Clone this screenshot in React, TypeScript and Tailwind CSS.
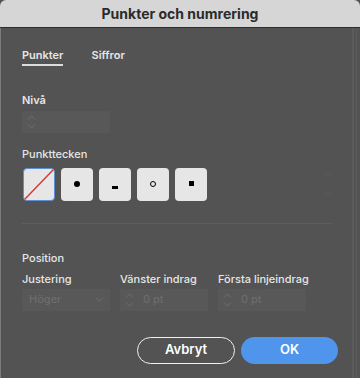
import React from "react";

function Chev({ dir }: { dir: "up" | "down" }) {
  return (
    <svg width="9" height="5" viewBox="0 0 9 5" fill="none">
      {dir === "up" ? (
        <path d="M1 4.5 L4.5 1 L8 4.5" stroke="#6f6f6f" strokeWidth="1" />
      ) : (
        <path d="M1 0.5 L4.5 4 L8 0.5" stroke="#6f6f6f" strokeWidth="1" />
      )}
    </svg>
  );
}

function Spinner({ value }: { value?: string }) {
  return (
    <div className="flex h-[22px] w-[88px] items-center bg-[#585858]">
      <div className="flex w-[18px] flex-col items-center gap-[4px] pl-[1px]">
        <Chev dir="up" />
        <Chev dir="down" />
      </div>
      <span className="pl-[5px] text-[11px] text-[#6c6c6c]">{value}</span>
    </div>
  );
}

function Box({ children, selected }: { children?: React.ReactNode; selected?: boolean }) {
  return (
    <div
      className={
        "relative flex h-[33px] w-[32px] items-center justify-center overflow-hidden rounded-[4px] bg-[#e6e6e6] " +
        (selected ? "border-[1.5px] border-[#5c8fd6]" : "")
      }
    >
      {children}
    </div>
  );
}

export default function App() {
  return (
    <div
      className="relative flex h-[378px] w-[360px] flex-col overflow-hidden bg-[#535353]"
      style={{ fontFamily: "Inter, 'Liberation Sans', sans-serif" }}
    >
      <div className="flex h-[28px] shrink-0 items-center justify-center rounded-t-[6px] border-b border-[#2e2e2e] bg-[#d6d6d6]">
        <span className="text-[14px] font-bold text-[#2b2b2b]">Punkter och numrering</span>
      </div>
      <div className="flex flex-1 border-l border-[#7c7c7c]">
        <div className="flex flex-1 flex-col pl-[21px] pr-[14px] text-[#e6e6e6]">
          <div className="mt-[19px] flex gap-[28px] text-[11px] font-semibold">
            <div className="flex flex-col">
              <span>Punkter</span>
              <div className="h-[2px] bg-[#dcdcdc]" />
            </div>
            <span>Siffror</span>
          </div>

          <span className="mt-[26px] text-[11px] font-semibold">Nivå</span>
          <div className="mt-[3px]">
            <Spinner />
          </div>

          <span className="mt-[13px] text-[11px] font-medium">Punkttecken</span>
          <div className="mt-[5px] flex items-center">
            <div className="flex gap-[6px] pl-[1px]">
              <Box selected>
                <svg className="absolute inset-0" width="100%" height="100%" viewBox="0 0 30 30" preserveAspectRatio="none">
                  <line x1="0" y1="30" x2="30" y2="0" stroke="#d33a35" strokeWidth="1.5" />
                </svg>
              </Box>
              <Box>
                <div className="h-[6px] w-[6px] rounded-full bg-black" />
              </Box>
              <Box>
                <div className="mt-[6px] h-[3px] w-[6px] bg-black" />
              </Box>
              <Box>
                <div className="h-[6px] w-[6px] rounded-full border-[1.5px] border-black" />
              </Box>
              <Box>
                <div className="mb-[1px] h-[5px] w-[5px] bg-black" />
              </Box>
            </div>
            <div className="ml-auto mr-[5px] flex flex-col gap-[14px] opacity-40">
              <svg width="9" height="5" viewBox="0 0 9 5" fill="none">
                <path d="M1 4.5 L4.5 1 L8 4.5" stroke="#6a6a6a" strokeWidth="1" />
              </svg>
              <svg width="9" height="5" viewBox="0 0 9 5" fill="none">
                <path d="M1 0.5 L4.5 4 L8 0.5" stroke="#6a6a6a" strokeWidth="1" />
              </svg>
            </div>
          </div>

          <div className="mt-[22px] mr-[5px] h-px bg-[#5d5d5d]" />

          <span className="mt-[26px] text-[11px] font-medium">Position</span>
          <div className="mt-[5px] grid grid-cols-[88px_88px_88px] gap-x-[10px] text-[11px] font-medium">
            <span>Justering</span>
            <span>Vänster indrag</span>
            <span className="whitespace-nowrap">Första linjeindrag</span>
            <div className="mt-[1px] flex h-[22px] items-center justify-between bg-[#585858] pl-[7px] pr-[6px]">
              <span className="text-[#6d6d6d]">Höger</span>
              <Chev dir="down" />
            </div>
            <div className="mt-[1px]">
              <Spinner value="0 pt" />
            </div>
            <div className="mt-[1px]">
              <Spinner value="0 pt" />
            </div>
          </div>

          <div className="mt-[26px] flex justify-end gap-[6px]">
            <button className="flex h-[27px] w-[98px] items-center justify-center rounded-full border-[1.5px] border-[#f0f0f0] text-[13px] font-semibold text-white">
              Avbryt
            </button>
            <button className="flex h-[27px] w-[97px] items-center justify-center rounded-full bg-[#4f95eb] text-[13px] font-semibold text-white">
              OK
            </button>
          </div>
        </div>
        <div className="w-[2px] bg-[#5c5c5c]" />
        <div className="w-[2px]" />
        <div className="w-[1px] bg-[#5c5c5c]" />
        <div className="w-[3px]" />
      </div>
    </div>
  );
}
